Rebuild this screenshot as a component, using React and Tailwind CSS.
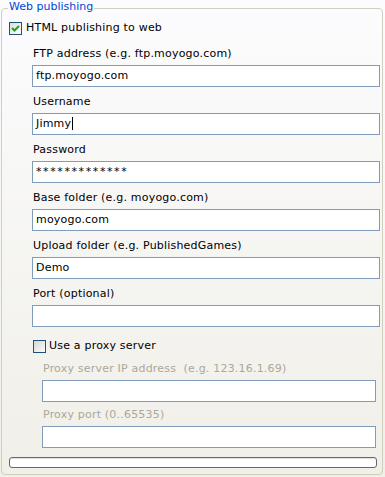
import React from 'react';

const font = { fontFamily: '"DejaVu Sans", Verdana, sans-serif' };

const CheckBox = ({ checked }) => (
    <span className={`w-[13px] h-[13px] border border-[#1c5180] flex items-center justify-center shrink-0 ${checked ? 'bg-gradient-to-br from-[#dcdcd7] to-white' : 'bg-gradient-to-br from-[#d8d8d2] to-[#fbfbf9]'}`}>
        {checked && (
            <svg width="9" height="9" viewBox="0 0 9 9">
                <path d="M1 4 L3.5 6.5 L8 2" stroke="#21a121" strokeWidth="2" fill="none" />
            </svg>
        )}
    </span>
);

const Field = ({ label, value, disabled, inset }) => (
    <div className={`flex flex-col ${inset ? 'pl-[42px] pr-[9px]' : 'pl-[32px] pr-[5px]'}`}>
        <div className={`h-[14px] leading-[14px] pl-[1px] whitespace-pre tracking-[0.2px] ${disabled ? 'text-[#aca899]' : 'text-black'}`}>{label}</div>
        <div className="mt-[4px] h-[22px] border border-[#7f9db9] bg-white flex items-center px-[3px] text-black tracking-[0.2px]">{value}</div>
    </div>
);

export default function App() {
    return (
        <div className="w-[385px] h-[477px] bg-gradient-to-b from-[#fcfcfe] to-[#f0efe8] text-[11px] relative" style={font}>
            <div className="absolute left-[1px] right-[2px] top-[8px] bottom-[2px] border border-[#d0d0bf] rounded-[4px]" />
            <div className="relative flex flex-col">
                <div className="pl-[8px] h-[14px] leading-[14px]">
                    <span className="text-[#0046d5] bg-[#fcfcfe] px-[1px]">Web publishing</span>
                </div>
                <label className="flex items-center gap-[4px] pl-[9px] mt-[8px] h-[13px]">
                    <CheckBox checked />
                    <span className="tracking-[0.2px]">HTML publishing to web</span>
                </label>
                <div className="flex flex-col gap-[8px] mt-[12px]">
                    <Field label="FTP address (e.g. ftp.moyogo.com)" value="ftp.moyogo.com" />
                    <Field label="Username" value={<span>Jimmy<span className="inline-block w-[1px] h-[13px] bg-black align-middle ml-[1px]" /></span>} />
                    <Field label="Password" value={<span className="tracking-[1.6px]">*************</span>} />
                    <Field label="Base folder (e.g. moyogo.com)" value="moyogo.com" />
                    <Field label="Upload folder (e.g. PublishedGames)" value="Demo" />
                    <Field label="Port (optional)" value="" />
                </div>
                <label className="flex items-center gap-[3px] pl-[33px] mt-[13px] h-[13px]">
                    <CheckBox />
                    <span className="tracking-[0.2px]">Use a proxy server</span>
                </label>
                <div className="flex flex-col gap-[6px] mt-[9px]">
                    <Field label="Proxy server IP address  (e.g. 123.16.1.69)" value="" disabled inset />
                    <Field label="Proxy port (0..65535)" value="" disabled inset />
                </div>
                <div className="ml-[9px] mr-[8px] mt-[9px] h-[11px] border border-[#686868] rounded-[3px] bg-white shadow-[inset_0_1px_1px_#e0e0e0]" />
            </div>
        </div>
    );
}
